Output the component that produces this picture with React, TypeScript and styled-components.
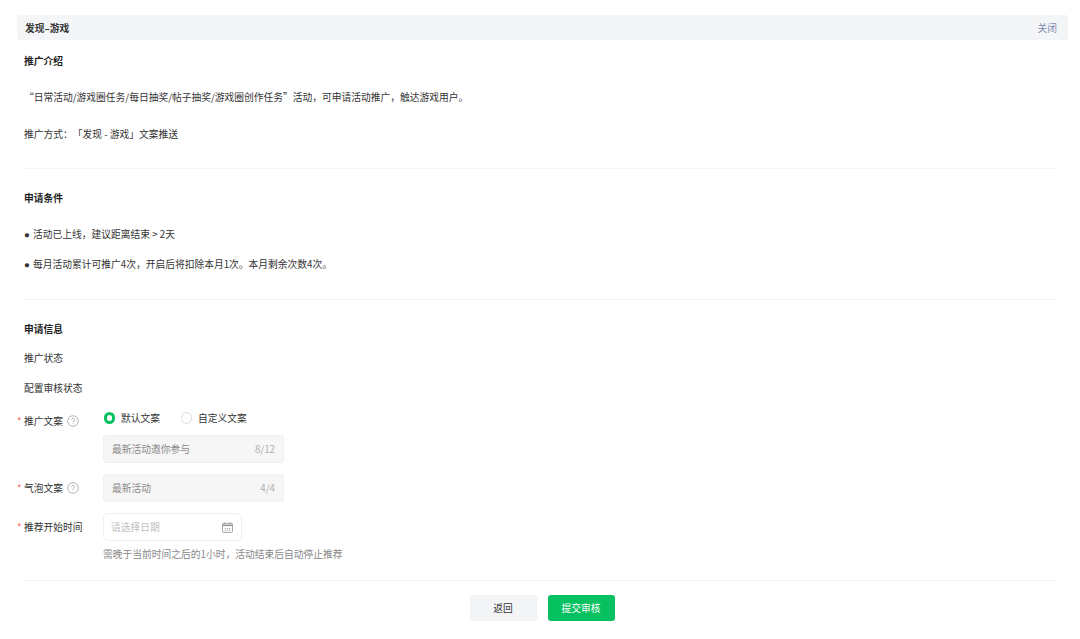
import React from "react";
import styled, { createGlobalStyle } from "styled-components";

const Global = createGlobalStyle`
  html, body { margin: 0; padding: 0; background: #fff; }
  body {
    font-family: "Noto Sans CJK SC", "Liberation Sans", sans-serif;
    font-size: 9.75px;
    color: #333;
    text-spacing-trim: space-all;
  }
`;
const Page = styled.div`
  width: 1080px;
  height: 639px;
  box-sizing: border-box;
  padding: 15px 12px 0 17px;
  overflow: hidden;
`;
const Header = styled.div`
  height: 25px;
  display: flex;
  align-items: center;
  justify-content: space-between;
  padding: 0 11px 0 8px;
  background: #f4f5f7;
  border-radius: 3px;
`;
const HeaderTitle = styled.span`
  font-weight: 700;
  color: #353535;
`;
const Close = styled.span`
  color: #7e8cb0;
`;
const Content = styled.div`
  padding: 0 12px 0 7px;
`;
const Title = styled.div<{ $top: number }>`
  margin-top: ${(p) => p.$top}px;
  height: 20px;
  line-height: 20px;
  font-weight: 700;
  color: #1f1f1f;
`;
const Line = styled.div<{ $top: number }>`
  margin-top: ${(p) => p.$top}px;
  height: 20px;
  line-height: 20px;
  color: #333;
  white-space: nowrap;
`;
const Bullet = styled.span`
  display: inline-block;
  width: 9px;
  font-family: "Liberation Sans", sans-serif;
`;
const Divider = styled.div<{ $top: number }>`
  margin-top: ${(p) => p.$top}px;
  height: 1px;
  background: #f4f4f4;
`;
const Form = styled.div`
  margin: 10px 0 0 -7px;
  display: grid;
  grid-template-columns: 86px 1fr;
`;
const Label = styled.div<{ $offset: number }>`
  padding-top: ${(p) => p.$offset}px;
  height: 20px;
  line-height: 20px;
  display: flex;
  align-items: center;
  color: #333;
  white-space: nowrap;
`;
const Star = styled.span`
  width: 7px;
  color: #f2695c;
`;
const Help = styled.svg`
  width: 12px;
  height: 12px;
  margin-left: 4px;
  margin-top: -1px;
  flex: none;
`;
const Field = styled.div<{ $bottom: number }>`
  display: flex;
  flex-direction: column;
  padding-bottom: ${(p) => p.$bottom}px;
`;
const Radios = styled.div`
  height: 20px;
  display: flex;
  align-items: center;
  margin-bottom: 7px;
`;
const RadioItem = styled.label<{ $width: number }>`
  width: ${(p) => p.$width}px;
  display: flex;
  align-items: center;
  color: #333;
`;
const RadioDot = styled.span<{ $on?: boolean }>`
  box-sizing: border-box;
  width: 11.5px;
  height: 11.5px;
  border-radius: 50%;
  margin: 0 6px 0 0.5px;
  background: #fff;
  border: ${(p) => (p.$on ? "3px solid #07c160" : "1px solid #dcdcdc")};
`;
const ReadOnlyInput = styled.div`
  box-sizing: border-box;
  width: 181px;
  height: 28px;
  display: flex;
  align-items: center;
  justify-content: space-between;
  padding: 0 8px;
  background: #f6f6f6;
  border: 1px solid #f0f0f0;
  border-radius: 3px;
  color: #8a8a8a;
`;
const Count = styled.span`
  color: #b0b0b0;
`;
const DateInput = styled.div`
  box-sizing: border-box;
  width: 139px;
  height: 28px;
  display: flex;
  align-items: center;
  justify-content: space-between;
  padding: 0 8px 0 7px;
  background: #fff;
  border: 1px solid #f0f0f0;
  border-radius: 5px;
  color: #c0c0c0;
`;
const CalendarIcon = styled.svg`
  width: 11px;
  height: 11px;
`;
const Hint = styled.div`
  margin-top: 3px;
  height: 20px;
  line-height: 20px;
  color: #888;
  white-space: nowrap;
`;
const Actions = styled.div`
  margin-top: 14px;
  display: flex;
  justify-content: center;
  gap: 11px;
  padding-left: 4px;
`;
const Button = styled.button<{ $primary?: boolean }>`
  box-sizing: border-box;
  width: 67px;
  height: 26px;
  padding: 0;
  font: inherit;
  border-radius: 3px;
  border: ${(p) => (p.$primary ? "none" : "1px solid #f0f1f3")};
  background: ${(p) => (p.$primary ? "#07c160" : "#f4f5f7")};
  color: ${(p) => (p.$primary ? "#fff" : "#333")};
`;

const HelpIcon = () => (
  <Help viewBox="0 0 13 13" fill="none">
    <circle cx="6.5" cy="6.5" r="5.7" stroke="#9a9a9a" strokeWidth="0.8" />
    <path d="M4.9 5.2a1.6 1.6 0 1 1 2.5 1.3c-.6.4-.9.7-.9 1.4" stroke="#9a9a9a" strokeWidth="0.8" />
    <circle cx="6.5" cy="9.5" r="0.5" fill="#9a9a9a" />
  </Help>
);

export default function App() {
  return (
    <Page lang="zh-CN">
      <Global />
      <Header>
        <HeaderTitle>发现–游戏</HeaderTitle>
        <Close>关闭</Close>
      </Header>
      <Content>
        <Title $top={11}>推广介绍</Title>
        <Line $top={16}>“日常活动/游戏圈任务/每日抽奖/帖子抽奖/游戏圈创作任务”活动，可申请活动推广，触达游戏用户。</Line>
        <Line $top={17}>推广方式：「发现 - 游戏」文案推送</Line>
        <Divider $top={24} />
        <Title $top={19}>申请条件</Title>
        <Line $top={16}><Bullet>●</Bullet>活动已上线，建议距离结束 &gt; 2天</Line>
        <Line $top={10}><Bullet>●</Bullet>每月活动累计可推广4次，开启后将扣除本月1次。本月剩余次数4次。</Line>
        <Divider $top={25} />
        <Title $top={19}>申请信息</Title>
        <Line $top={9}>推广状态</Line>
        <Line $top={10}>配置审核状态</Line>
        <Form>
          <Label $offset={3}>
            <Star>*</Star>推广文案<HelpIcon />
          </Label>
          <Field $bottom={11}>
            <Radios>
              <RadioItem $width={77}>
                <RadioDot $on />默认文案
              </RadioItem>
              <RadioItem $width={90}>
                <RadioDot />自定义文案
              </RadioItem>
            </Radios>
            <ReadOnlyInput>
              <span>最新活动邀你参与</span>
              <Count>8/12</Count>
            </ReadOnlyInput>
          </Field>
          <Label $offset={4}>
            <Star>*</Star>气泡文案<HelpIcon />
          </Label>
          <Field $bottom={11}>
            <ReadOnlyInput>
              <span>最新活动</span>
              <Count>4/4</Count>
            </ReadOnlyInput>
          </Field>
          <Label $offset={4}>
            <Star>*</Star>推荐开始时间
          </Label>
          <Field $bottom={0}>
            <DateInput>
              <span>请选择日期</span>
              <CalendarIcon viewBox="0 0 12 12" fill="none">
                <rect x="0.6" y="1.4" width="10.8" height="10" rx="1" stroke="#8f8f8f" strokeWidth="0.9" />
                <path d="M1 3.6h10" stroke="#8f8f8f" strokeWidth="1.6" />
                <path d="M3 0.6v1.6M9 0.6v1.6M3 7h1.4M5.3 7h1.4M7.6 7H9M3 9h1.4M5.3 9h1.4M7.6 9H9" stroke="#8f8f8f" strokeWidth="0.9" />
              </CalendarIcon>
            </DateInput>
            <Hint>需晚于当前时间之后的1小时，活动结束后自动停止推荐</Hint>
          </Field>
        </Form>
        <Divider $top={16} />
        <Actions>
          <Button>返回</Button>
          <Button $primary>提交审核</Button>
        </Actions>
      </Content>
    </Page>
  );
}
